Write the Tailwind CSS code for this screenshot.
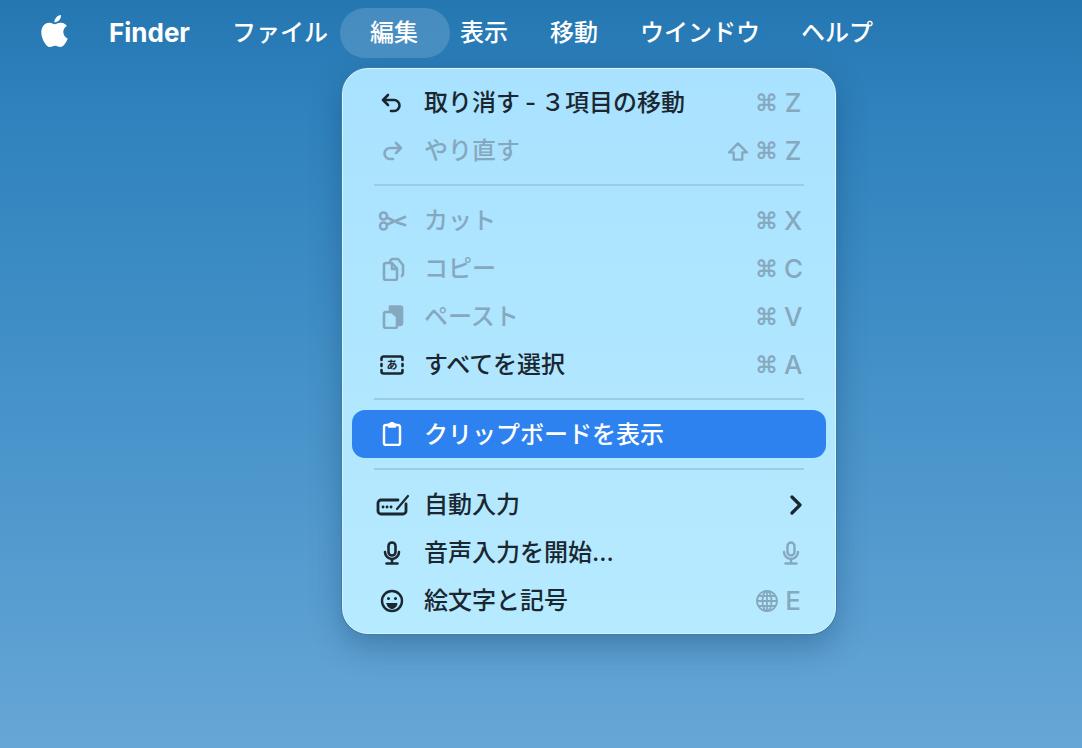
<!DOCTYPE html>
<html lang="ja">
<head>
  <meta charset="UTF-8" />
  <title>Finder 編集メニュー</title>
  <script src="https://cdn.jsdelivr.net/npm/@tailwindcss/browser@4"></script>
</head>
<body class="w-[1082px] h-[748px] overflow-hidden bg-[linear-gradient(180deg,#2577b2_0%,#2f82bd_15%,#4a95cb_60%,#66a6d6_100%)] font-['Inter','Noto_Sans_CJK_JP',sans-serif]">
  <!-- menu bar -->
  <header class="h-[58px] pt-2 pl-[41px] flex items-start text-white text-[24px] font-medium leading-[50px] [&>span]:h-[50px]">
    <svg class="w-[27px] h-[32px] mt-[7px]" viewBox="2 0 20 24" preserveAspectRatio="none" fill="#fff"><path d="M12.152 6.896c-.948 0-2.415-1.078-3.96-1.04-2.04.027-3.91 1.183-4.961 3.014-2.117 3.675-.546 9.103 1.519 12.09 1.013 1.454 2.208 3.09 3.792 3.039 1.52-.065 2.09-.987 3.935-.987 1.831 0 2.35.987 3.96.948 1.637-.026 2.676-1.48 3.676-2.948 1.156-1.688 1.636-3.325 1.662-3.415-.039-.013-3.182-1.221-3.22-4.857-.026-3.04 2.48-4.494 2.597-4.559-1.429-2.09-3.623-2.324-4.39-2.376-2-.156-3.675 1.09-4.61 1.09zM15.53 3.83c.843-1.012 1.4-2.427 1.245-3.83-1.207.052-2.662.805-3.532 1.818-.78.896-1.454 2.338-1.273 3.714 1.338.104 2.715-.688 3.559-1.701"/></svg>
    <span class="ml-[41px] font-bold text-[26px]">Finder</span>
    <span class="ml-[42px]">ファイル</span>
    <span class="ml-[12px] pl-[30px] pr-[32px] rounded-[25px] bg-white/15">編集</span>
    <span class="ml-[10px]">表示</span>
    <span class="ml-[42px]">移動</span>
    <span class="ml-[42px]">ウインドウ</span>
    <span class="ml-[41px]">ヘルプ</span>
  </header>

  <!-- edit menu -->
  <div class="ml-[342px] mt-[10px] w-[494px] h-[566px] py-[10px] px-[9px] rounded-[26px] border border-[#d3f5ff] bg-[linear-gradient(180deg,#a9e2ff_0%,#b6eaff_100%)] shadow-[0_0_0_1px_#3f7ba6,0_12px_32px_rgba(0,40,80,0.3)] text-[24px] font-medium text-[#1b2730]">

    <div class="h-12 pl-5 pr-6 flex items-center">
      <svg class="w-10 h-6" viewBox="0 0 40 24" fill="none" stroke="#1b2730" stroke-width="2.6" stroke-linecap="round" stroke-linejoin="round"><path d="M16 4l-5 5 5 5M11 9h11a5.500 5.500 0 0 1 0 11h-3"/></svg>
      <span class="ml-3 [word-spacing:-1.5px]">取り消す - ３項目の移動</span>
      <span class="ml-auto flex items-center text-[#86a8bf] leading-none"><b class="font-normal text-[23px] font-['DejaVu_Sans'] [-webkit-text-stroke:0.4px_#86a8bf]">⌘</b><b class="ml-[6px] w-[18px] text-center font-[450] text-[26px]">Z</b></span>
    </div>

    <div class="h-12 pl-5 pr-6 flex items-center text-[#86a8bf]">
      <svg class="w-10 h-6" viewBox="0 0 40 24" fill="none" stroke="#86a8bf" stroke-width="2.6" stroke-linecap="round" stroke-linejoin="round"><path d="M24 4l5 5-5 5M29 9h-11a5.500 5.500 0 0 0 0 11h3"/></svg>
      <span class="ml-3">やり直す</span>
      <span class="ml-auto flex items-center leading-none">
        <svg class="w-[22px] h-[21px] mr-[6px]" viewBox="0 0 23 21" fill="none" stroke="#86a8bf" stroke-width="2.4" stroke-linejoin="round"><path d="M11.500 2L21 11.500h-5V19H7v-7.500H2z"/></svg>
        <b class="font-normal text-[23px] font-['DejaVu_Sans'] [-webkit-text-stroke:0.4px_#86a8bf]">⌘</b><b class="ml-[6px] w-[18px] text-center font-[450] text-[26px]">Z</b></span>
    </div>

    <div class="h-[22px] pb-[2px] flex items-center px-[22px]"><div class="h-0.5 w-full bg-[#9ccbe6]"></div></div>

    <div class="h-12 pl-5 pr-6 flex items-center text-[#86a8bf]">
      <svg class="w-10 h-6" viewBox="0 0 40 24" fill="none" stroke="#86a8bf" stroke-width="2.6" stroke-linecap="round"><circle cx="11.500" cy="7" r="3.500"/><circle cx="11.500" cy="17" r="3.500"/><path d="M15 8.500l7 3.500M25 13.500l8 2.500M15 15.500l18-7.500" stroke-width="2.800"/></svg>
      <span class="ml-3">カット</span>
      <span class="ml-auto flex items-center leading-none"><b class="font-normal text-[23px] font-['DejaVu_Sans'] [-webkit-text-stroke:0.4px_#86a8bf]">⌘</b><b class="ml-[6px] w-[18px] text-center font-[450] text-[26px]">X</b></span>
    </div>

    <div class="h-12 pl-5 pr-6 flex items-center text-[#86a8bf]">
      <svg class="w-10 h-6" viewBox="0 0 40 24" fill="none" stroke="#86a8bf" stroke-width="2.6" stroke-linejoin="round"><path d="M18 6v-1a3 3 0 0 1 3-3h5l5 6v9a3 3 0 0 1-2 2.500"/><path d="M14 6h6l5 5.500V21a2 2 0 0 1-2 2h-9a2 2 0 0 1-2-2V8a2 2 0 0 1 2-2z"/><path d="M20 7v5h5"/></svg>
      <span class="ml-3">コピー</span>
      <span class="ml-auto flex items-center leading-none"><b class="font-normal text-[23px] font-['DejaVu_Sans'] [-webkit-text-stroke:0.4px_#86a8bf]">⌘</b><b class="ml-[6px] w-[18px] text-center font-[450] text-[26px]">C</b></span>
    </div>

    <div class="h-12 pl-5 pr-6 flex items-center text-[#86a8bf]">
      <svg class="w-10 h-6" viewBox="0 0 40 24" fill="none" stroke="#86a8bf" stroke-width="2.6" stroke-linejoin="round"><path d="M18 1.500h10a2 2 0 0 1 2 2V18a2 2 0 0 1-2 2h-2V10l-4-4h-4z" fill="#86a8bf"/><path d="M14 7h6l5 4.500V21a2 2 0 0 1-2 2h-9a2 2 0 0 1-2-2V9a2 2 0 0 1 2-2z"/></svg>
      <span class="ml-3">ペースト</span>
      <span class="ml-auto flex items-center leading-none"><b class="font-normal text-[23px] font-['DejaVu_Sans'] [-webkit-text-stroke:0.4px_#86a8bf]">⌘</b><b class="ml-[6px] w-[18px] text-center font-[450] text-[26px]">V</b></span>
    </div>

    <div class="h-12 pl-5 pr-6 flex items-center">
      <div class="w-10 h-6 flex justify-center items-center relative">
        <svg class="absolute left-[8px] top-[2px] w-[24px] h-[20px]" viewBox="0 0 24 20" fill="none" stroke="#1b2730" stroke-width="2.6" stroke-linecap="round"><path d="M1.500 5V3.500a2 2 0 0 1 2-2h17a2 2 0 0 1 2 2V5M1.500 15v1.500a2 2 0 0 0 2 2h17a2 2 0 0 0 2-2V15M1.500 9v2M22.500 9v2"/></svg>
        <span class="text-[11px] leading-none font-bold">あ</span>
      </div>
      <span class="ml-3">すべてを選択</span>
      <span class="ml-auto flex items-center text-[#86a8bf] leading-none"><b class="font-normal text-[23px] font-['DejaVu_Sans'] [-webkit-text-stroke:0.4px_#86a8bf]">⌘</b><b class="ml-[6px] w-[18px] text-center font-[450] text-[26px]">A</b></span>
    </div>

    <div class="h-[21px] pb-[2px] flex items-center px-[22px]"><div class="h-0.5 w-full bg-[#9ccbe6]"></div></div>

    <div class="h-12 pl-5 pr-6 flex items-center rounded-[13px] bg-[#2d82ef] text-white">
      <svg class="w-10 h-6" viewBox="0 0 40 24" fill="none" stroke="#fff" stroke-width="2.4" stroke-linejoin="round"><path d="M17 3h-3a2 2 0 0 0-2 2v16a2 2 0 0 0 2 2h12a2 2 0 0 0 2-2V5a2 2 0 0 0-2-2h-3"/><path d="M17 4.500V2.500h1.500a1.500 1.500 0 0 1 3 0H23v2z" fill="#fff"/></svg>
      <span class="ml-3 pt-px">クリップボードを表示</span>
    </div>

    <div class="h-[23px] pb-[2px] flex items-center px-[22px]"><div class="h-0.5 w-full bg-[#9ccbe6]"></div></div>

    <div class="h-12 pl-5 pr-6 flex items-center">
      <svg class="w-10 h-6" viewBox="0 0 40 24" fill="none" stroke="#1b2730" stroke-width="2.8" stroke-linecap="round" stroke-linejoin="round"><path d="M26 7H9a3 3 0 0 0-3 3v8a3 3 0 0 0 3 3h22a3 3 0 0 0 3-3v-7"/><path d="M25 16L36 3" stroke-width="2.200"/><path d="M11 14h.1M15 14h.1M19 14h.1" stroke-width="2.800"/></svg>
      <span class="ml-3">自動入力</span>
      <svg class="ml-auto w-[14px] h-[20px] mr-[-1px]" viewBox="0 0 14 20" fill="none" stroke="#1b2730" stroke-width="3.2" stroke-linecap="round" stroke-linejoin="round"><path d="M3 2l8 8-8 8"/></svg>
    </div>

    <div class="h-12 pl-5 pr-6 flex items-center">
      <svg class="w-10 h-6" viewBox="0 0 40 24" fill="none" stroke="#1b2730" stroke-width="2.600" stroke-linecap="round"><rect x="16.500" y="1.500" width="7" height="13" rx="3.500"/><path d="M13 11a7 7 0 0 0 14 0M20 18v4M14.500 22.500h11"/></svg>
      <span class="ml-3">音声入力を開始...</span>
      <svg class="ml-auto w-6 h-6 mr-[-1px]" viewBox="0 0 24 24" fill="none" stroke="#86a8bf" stroke-width="2.400" stroke-linecap="round"><rect x="8.500" y="1.500" width="7" height="13" rx="3.500"/><path d="M5 11a7 7 0 0 0 14 0M12 18v4M6.500 22.500h11"/></svg>
    </div>

    <div class="h-12 pl-5 pr-6 flex items-center">
      <svg class="w-10 h-6" viewBox="0 0 40 24" fill="none" stroke="#1b2730" stroke-width="2.400" stroke-linecap="round"><circle cx="20" cy="12" r="10"/><path d="M15 14.500h10a5 5 0 0 1-10 0z" fill="#1b2730" stroke-width="1"/><circle cx="16.500" cy="9.500" r="1.500" fill="#1b2730" stroke="none"/><circle cx="23.500" cy="9.500" r="1.500" fill="#1b2730" stroke="none"/></svg>
      <span class="ml-3">絵文字と記号</span>
      <span class="ml-auto flex items-center text-[#86a8bf] leading-none">
        <svg class="w-[22px] h-[22px]" viewBox="0 0 22 22" fill="none" stroke="#86a8bf" stroke-width="1.800"><circle cx="11" cy="11" r="10"/><ellipse cx="11" cy="11" rx="4.500" ry="10"/><path d="M11 1v20M1 11h20M3 6h16M3 16h16"/></svg>
        <b class="ml-[6px] w-[18px] text-center font-[450] text-[26px]">E</b></span>
    </div>
  </div>
</body>
</html>
